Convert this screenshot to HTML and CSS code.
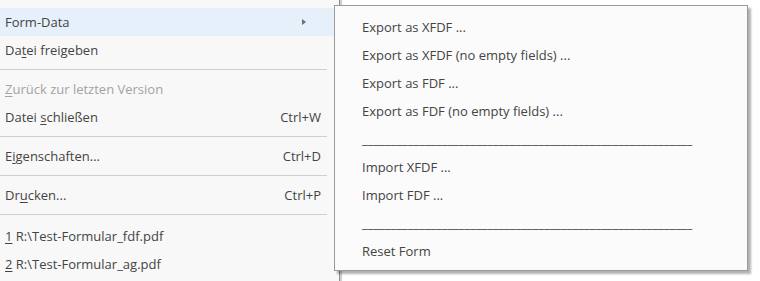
FILE: index.html
```html
<!DOCTYPE html>
<html lang="de">
<head>
  <meta charset="UTF-8">
  <title>Datei-Menü</title>
  <link rel="stylesheet" href="styles.css">
</head>
<body>
  <div class="menu">
    <div class="item active">
      <span>Form-Data</span>
      <span class="arrow"></span>
    </div>
    <div class="item"><span>Da<u>t</u>ei freigeben</span></div>
    <div class="sep"></div>
    <div class="item disabled"><span><u>Z</u>urück zur letzten Version</span></div>
    <div class="item"><span>Datei <u>s</u>chließen</span><span class="key">Ctrl+W</span></div>
    <div class="sep"></div>
    <div class="item"><span>E<u>i</u>genschaften...</span><span class="key">Ctrl+D</span></div>
    <div class="sep"></div>
    <div class="item"><span>Dr<u>u</u>cken...</span><span class="key">Ctrl+P</span></div>
    <div class="sep recent"></div>
    <div class="item"><span><u>1</u> R:\Test-Formular_fdf.pdf</span></div>
    <div class="item"><span><u>2</u> R:\Test-Formular_ag.pdf</span></div>
  </div>

  <div class="submenu">
    <div class="sub-item">Export as XFDF ...</div>
    <div class="sub-item">Export as XFDF (no empty fields) ...</div>
    <div class="sub-item">Export as FDF ...</div>
    <div class="sub-item">Export as FDF (no empty fields) ...</div>
    <div class="sub-item">__________________________________________________________</div>
    <div class="sub-item">Import XFDF ...</div>
    <div class="sub-item">Import FDF ...</div>
    <div class="sub-item">__________________________________________________________</div>
    <div class="sub-item">Reset Form</div>
  </div>
</body>
</html>
```

FILE: styles.css
```css
body {
  margin: 0;
  background-color: #fff;
  font-family: "Open Sans", "Noto Sans", sans-serif;
  font-size: 13px;
  color: #444;
  height: 281px;
  overflow: hidden;
  position: relative;
}

.menu {
  width: 340px;
  height: 281px;
  box-sizing: border-box;
  padding-top: 8px;
  background-color: #f8f8f8;
  border-right: 1px solid #8c8c8c;
  box-shadow: 2px 0 1px rgba(0, 0, 0, 0.18);
}

.item {
  display: flex;
  justify-content: space-between;
  align-items: center;
  height: 28px;
  padding: 0 18px 0 5px;
}

.item.active {
  background-color: #e5f0fa;
}

.item.disabled {
  color: #a3a3a3;
}

.item u {
  text-decoration-thickness: 1px;
  text-underline-offset: 2px;
}

.arrow {
  width: 0;
  height: 0;
  margin-right: 15px;
  border-top: 3.5px solid transparent;
  border-bottom: 3.5px solid transparent;
  border-left: 4px solid #6e6e6e;
}

.sep {
  height: 1px;
  margin: 5px 12px 5px 0;
  background-color: #cfcfcf;
}

.sep.recent {
  margin-bottom: 7px;
}

.submenu {
  position: absolute;
  left: 334px;
  top: 5px;
  width: 414px;
  height: 266px;
  box-sizing: border-box;
  padding: 7px 0 6px 27px;
  background-color: #fbfbfb;
  border: 1px solid #9a9a9a;
  box-shadow: 3px 3px 2px rgba(0, 0, 0, 0.3);
}

.sub-item {
  height: 28px;
  line-height: 28px;
  white-space: nowrap;
}
```
